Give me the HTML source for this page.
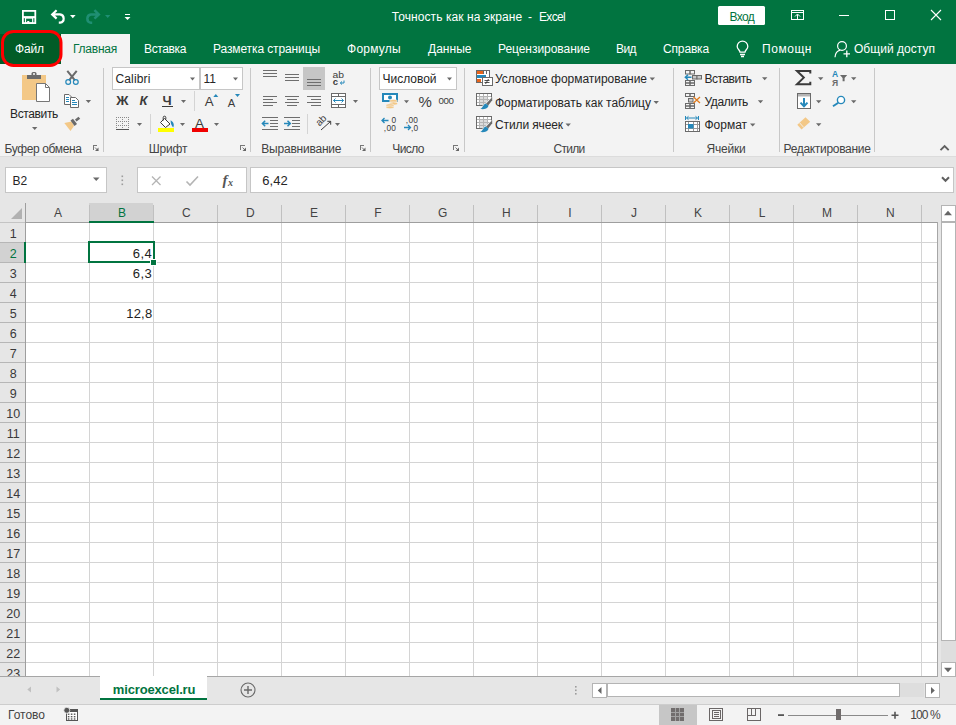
<!DOCTYPE html>
<html lang="ru"><head><meta charset="utf-8"><title>Excel</title>
<style>
html,body{margin:0;padding:0;}
body{width:956px;height:725px;overflow:hidden;position:relative;background:#e6e6e6;font-family:'Liberation Sans', sans-serif;}
div{position:absolute;}
.t{position:absolute;white-space:pre;line-height:20px;height:20px;}
svg{position:absolute;left:0;top:0;}
</style></head><body>
<div style="left:0px;top:0px;width:956px;height:64px;background:#017440;"></div>
<div style="left:0px;top:34px;width:61px;height:30px;background:#015c27;"></div>
<div style="left:61px;top:34px;width:69px;height:30px;background:#f3f3f3;"></div>
<div style="left:0px;top:64px;width:956px;height:92px;background:#f3f3f3;"></div>
<div style="left:0px;top:156px;width:956px;height:1px;background:#dcdcdc;"></div>
<div style="left:718px;top:6px;width:47px;height:19px;background:#fff;border:none;box-sizing:border-box;border-radius:1.5px;"></div>
<div style="left:103px;top:68px;width:1px;height:84px;background:#c8c8c8;"></div>
<div style="left:250px;top:68px;width:1px;height:84px;background:#c8c8c8;"></div>
<div style="left:370px;top:68px;width:1px;height:84px;background:#c8c8c8;"></div>
<div style="left:464px;top:68px;width:1px;height:84px;background:#c8c8c8;"></div>
<div style="left:673px;top:68px;width:1px;height:84px;background:#c8c8c8;"></div>
<div style="left:779px;top:68px;width:1px;height:84px;background:#c8c8c8;"></div>
<div style="left:874px;top:68px;width:1px;height:84px;background:#c8c8c8;"></div>
<div style="left:112px;top:67px;width:88px;height:23px;background:#fff;border:1px solid #c6c6c6;box-sizing:border-box;"></div>
<div style="left:200px;top:67px;width:43px;height:23px;background:#fff;border:1px solid #c6c6c6;box-sizing:border-box;"></div>
<div style="left:162px;top:106px;width:10.5px;height:1px;background:#3b3b3b;"></div>
<div style="left:194px;top:91px;width:1px;height:20px;background:#d4d4d4;"></div>
<div style="left:150px;top:114px;width:1px;height:20px;background:#d4d4d4;"></div>
<div style="left:303px;top:67px;width:22px;height:23px;background:#c6c6c6;"></div>
<div style="left:307px;top:114px;width:1px;height:20px;background:#d4d4d4;"></div>
<div style="left:379px;top:67px;width:78px;height:23px;background:#fff;border:1px solid #c6c6c6;box-sizing:border-box;"></div>
<div style="left:5px;top:167px;width:102px;height:26px;background:#fff;border:1px solid #c6c6c6;box-sizing:border-box;"></div>
<div style="left:137px;top:167px;width:110px;height:26px;background:#fff;border:1px solid #c6c6c6;box-sizing:border-box;"></div>
<div style="left:250px;top:167px;width:704px;height:26px;background:#fff;border:1px solid #c6c6c6;box-sizing:border-box;"></div>
<div style="left:0px;top:203px;width:956px;height:19px;background:#e6e6e6;"></div>
<div style="left:0px;top:222px;width:938px;height:454px;background:#fff;"></div>
<div style="left:89px;top:203px;width:64px;height:19px;background:#d2d2d2;"></div>
<div style="left:0px;top:242px;width:25px;height:20px;background:#d2d2d2;"></div>
<div style="left:0px;top:222px;width:25px;height:454px;background:#e6e6e6;border:none;box-sizing:border-box;z-index:0;"></div>
<div style="left:0px;top:242px;width:25px;height:20px;background:#d2d2d2;"></div>
<div style="left:25px;top:205px;width:1px;height:17px;background:#c0c0c0;"></div>
<div style="left:89px;top:205px;width:1px;height:17px;background:#c0c0c0;"></div>
<div style="left:153px;top:205px;width:1px;height:17px;background:#c0c0c0;"></div>
<div style="left:217px;top:205px;width:1px;height:17px;background:#c0c0c0;"></div>
<div style="left:281px;top:205px;width:1px;height:17px;background:#c0c0c0;"></div>
<div style="left:345px;top:205px;width:1px;height:17px;background:#c0c0c0;"></div>
<div style="left:409px;top:205px;width:1px;height:17px;background:#c0c0c0;"></div>
<div style="left:473px;top:205px;width:1px;height:17px;background:#c0c0c0;"></div>
<div style="left:537px;top:205px;width:1px;height:17px;background:#c0c0c0;"></div>
<div style="left:601px;top:205px;width:1px;height:17px;background:#c0c0c0;"></div>
<div style="left:665px;top:205px;width:1px;height:17px;background:#c0c0c0;"></div>
<div style="left:729px;top:205px;width:1px;height:17px;background:#c0c0c0;"></div>
<div style="left:793px;top:205px;width:1px;height:17px;background:#c0c0c0;"></div>
<div style="left:857px;top:205px;width:1px;height:17px;background:#c0c0c0;"></div>
<div style="left:921px;top:205px;width:1px;height:17px;background:#c0c0c0;"></div>
<div style="left:25px;top:222px;width:1px;height:454px;background:#d4d4d4;"></div>
<div style="left:89px;top:222px;width:1px;height:454px;background:#d4d4d4;"></div>
<div style="left:153px;top:222px;width:1px;height:454px;background:#d4d4d4;"></div>
<div style="left:217px;top:222px;width:1px;height:454px;background:#d4d4d4;"></div>
<div style="left:281px;top:222px;width:1px;height:454px;background:#d4d4d4;"></div>
<div style="left:345px;top:222px;width:1px;height:454px;background:#d4d4d4;"></div>
<div style="left:409px;top:222px;width:1px;height:454px;background:#d4d4d4;"></div>
<div style="left:473px;top:222px;width:1px;height:454px;background:#d4d4d4;"></div>
<div style="left:537px;top:222px;width:1px;height:454px;background:#d4d4d4;"></div>
<div style="left:601px;top:222px;width:1px;height:454px;background:#d4d4d4;"></div>
<div style="left:665px;top:222px;width:1px;height:454px;background:#d4d4d4;"></div>
<div style="left:729px;top:222px;width:1px;height:454px;background:#d4d4d4;"></div>
<div style="left:793px;top:222px;width:1px;height:454px;background:#d4d4d4;"></div>
<div style="left:857px;top:222px;width:1px;height:454px;background:#d4d4d4;"></div>
<div style="left:921px;top:222px;width:1px;height:454px;background:#d4d4d4;"></div>
<div style="left:25px;top:242px;width:913px;height:1px;background:#d4d4d4;"></div>
<div style="left:0px;top:242px;width:25px;height:1px;background:#b6b6b6;"></div>
<div style="left:25px;top:262px;width:913px;height:1px;background:#d4d4d4;"></div>
<div style="left:0px;top:262px;width:25px;height:1px;background:#b6b6b6;"></div>
<div style="left:25px;top:282px;width:913px;height:1px;background:#d4d4d4;"></div>
<div style="left:0px;top:282px;width:25px;height:1px;background:#b6b6b6;"></div>
<div style="left:25px;top:302px;width:913px;height:1px;background:#d4d4d4;"></div>
<div style="left:0px;top:302px;width:25px;height:1px;background:#b6b6b6;"></div>
<div style="left:25px;top:322px;width:913px;height:1px;background:#d4d4d4;"></div>
<div style="left:0px;top:322px;width:25px;height:1px;background:#b6b6b6;"></div>
<div style="left:25px;top:342px;width:913px;height:1px;background:#d4d4d4;"></div>
<div style="left:0px;top:342px;width:25px;height:1px;background:#b6b6b6;"></div>
<div style="left:25px;top:362px;width:913px;height:1px;background:#d4d4d4;"></div>
<div style="left:0px;top:362px;width:25px;height:1px;background:#b6b6b6;"></div>
<div style="left:25px;top:382px;width:913px;height:1px;background:#d4d4d4;"></div>
<div style="left:0px;top:382px;width:25px;height:1px;background:#b6b6b6;"></div>
<div style="left:25px;top:402px;width:913px;height:1px;background:#d4d4d4;"></div>
<div style="left:0px;top:402px;width:25px;height:1px;background:#b6b6b6;"></div>
<div style="left:25px;top:422px;width:913px;height:1px;background:#d4d4d4;"></div>
<div style="left:0px;top:422px;width:25px;height:1px;background:#b6b6b6;"></div>
<div style="left:25px;top:442px;width:913px;height:1px;background:#d4d4d4;"></div>
<div style="left:0px;top:442px;width:25px;height:1px;background:#b6b6b6;"></div>
<div style="left:25px;top:462px;width:913px;height:1px;background:#d4d4d4;"></div>
<div style="left:0px;top:462px;width:25px;height:1px;background:#b6b6b6;"></div>
<div style="left:25px;top:482px;width:913px;height:1px;background:#d4d4d4;"></div>
<div style="left:0px;top:482px;width:25px;height:1px;background:#b6b6b6;"></div>
<div style="left:25px;top:502px;width:913px;height:1px;background:#d4d4d4;"></div>
<div style="left:0px;top:502px;width:25px;height:1px;background:#b6b6b6;"></div>
<div style="left:25px;top:522px;width:913px;height:1px;background:#d4d4d4;"></div>
<div style="left:0px;top:522px;width:25px;height:1px;background:#b6b6b6;"></div>
<div style="left:25px;top:542px;width:913px;height:1px;background:#d4d4d4;"></div>
<div style="left:0px;top:542px;width:25px;height:1px;background:#b6b6b6;"></div>
<div style="left:25px;top:562px;width:913px;height:1px;background:#d4d4d4;"></div>
<div style="left:0px;top:562px;width:25px;height:1px;background:#b6b6b6;"></div>
<div style="left:25px;top:582px;width:913px;height:1px;background:#d4d4d4;"></div>
<div style="left:0px;top:582px;width:25px;height:1px;background:#b6b6b6;"></div>
<div style="left:25px;top:602px;width:913px;height:1px;background:#d4d4d4;"></div>
<div style="left:0px;top:602px;width:25px;height:1px;background:#b6b6b6;"></div>
<div style="left:25px;top:622px;width:913px;height:1px;background:#d4d4d4;"></div>
<div style="left:0px;top:622px;width:25px;height:1px;background:#b6b6b6;"></div>
<div style="left:25px;top:642px;width:913px;height:1px;background:#d4d4d4;"></div>
<div style="left:0px;top:642px;width:25px;height:1px;background:#b6b6b6;"></div>
<div style="left:25px;top:662px;width:913px;height:1px;background:#d4d4d4;"></div>
<div style="left:0px;top:662px;width:25px;height:1px;background:#b6b6b6;"></div>
<div style="left:25px;top:682px;width:913px;height:1px;background:#d4d4d4;"></div>
<div style="left:0px;top:682px;width:25px;height:1px;background:#b6b6b6;"></div>
<div style="left:0px;top:222px;width:25px;height:1px;background:#c4c4c4;"></div>
<div style="left:25px;top:222px;width:913px;height:1px;background:#9e9e9e;"></div>
<div style="left:25px;top:203px;width:1px;height:473px;background:#9e9e9e;"></div>
<div style="left:89px;top:221px;width:65px;height:2px;background:#017440;"></div>
<div style="left:24px;top:242px;width:2px;height:21px;background:#017440;"></div>
<div style="left:88px;top:241px;width:67px;height:22px;border:2px solid #017440;box-sizing:border-box;"></div>
<div style="left:150px;top:259px;width:7px;height:7px;background:#fff;"></div>
<div style="left:151px;top:260px;width:5px;height:5px;background:#017440;"></div>
<div style="left:938px;top:203px;width:18px;height:473px;background:#e6e6e6;"></div>
<div style="left:941px;top:205px;width:15px;height:17px;background:#fff;border:1px solid #b4b4b4;box-sizing:border-box;"></div>
<div style="left:941px;top:222px;width:15px;height:419px;background:#fff;border:1px solid #b4b4b4;box-sizing:border-box;"></div>
<div style="left:941px;top:641px;width:15px;height:21px;background:#dedede;"></div>
<div style="left:941px;top:662px;width:15px;height:15px;background:#fff;border:1px solid #b4b4b4;box-sizing:border-box;"></div>
<div style="left:0px;top:677px;width:956px;height:27px;background:#e6e6e6;"></div>
<div style="left:0px;top:676px;width:938px;height:1px;background:#a6a6a6;"></div>
<div style="left:937px;top:222px;width:1px;height:455px;background:#a6a6a6;"></div>
<div style="left:100px;top:676px;width:107px;height:22px;background:#fff;"></div>
<div style="left:100px;top:698px;width:107px;height:2px;background:#017440;"></div>
<div style="left:592px;top:683px;width:15px;height:15px;background:#fff;border:1px solid #b4b4b4;box-sizing:border-box;"></div>
<div style="left:607px;top:683px;width:293px;height:14px;background:#fff;border:1px solid #b4b4b4;box-sizing:border-box;"></div>
<div style="left:900px;top:683px;width:24px;height:14px;background:#dedede;"></div>
<div style="left:925px;top:683px;width:15px;height:15px;background:#fff;border:1px solid #b4b4b4;box-sizing:border-box;"></div>
<div style="left:0px;top:704px;width:956px;height:21px;background:#f3f3f3;"></div>
<div style="left:0px;top:704px;width:956px;height:1px;background:#cdcdcd;"></div>
<div style="left:659px;top:705px;width:38px;height:20px;background:#c6c6c6;"></div>
<svg width="956" height="725" viewBox="0 0 956 725">
<rect x="2.5" y="31.5" width="58.5" height="34" rx="11" ry="11" fill="#015c27" stroke="#ff0000" stroke-width="3"/>
<rect x="22.9" y="10.9" width="12.4" height="12.2" fill="none" stroke="#fff" stroke-width="1.8"/>
<rect x="23" y="16.1" width="12" height="2.1" fill="#fff" />
<rect x="25.5" y="18" width="7.2" height="5" fill="none" stroke="#fff" stroke-width="1.2"/>
<rect x="27.2" y="21" width="2.1" height="2.2" fill="#fff" />
<path d="M56.6,10.2 L52.2,14.4 L56.6,18.6 M52.5,14.4 H60 A4.2,4.2 0 0 1 60.2,22.7 H58.8" fill="none" stroke="#fff" stroke-width="2.2" stroke-linejoin="miter"/>
<polygon points="70,15 75.6,15 72.8,18.2" fill="#fff"/>
<path d="M94.4,10.2 L98.8,14.4 L94.4,18.6 M98.5,14.4 H91 A4.2,4.2 0 0 0 90.8,22.7 H92.2" fill="none" stroke="#1f8f73" stroke-width="2.5" />
<polygon points="105,15 110.4,15 107.7,18" fill="#1f8f73"/>
<rect x="125" y="14" width="5" height="1" fill="#fff" />
<polygon points="124.5,17 130.5,17 127.5,20" fill="#fff"/>
<rect x="791.5" y="10.5" width="12" height="9" fill="none" stroke="#fff" stroke-width="1" shape-rendering="crispEdges"/>
<rect x="791" y="12" width="13" height="1" fill="#fff" shape-rendering="crispEdges"/>
<path d="M797.5,19 V14.5 M795,16.5 L797.5,14 L800,16.5" fill="none" stroke="#fff" stroke-width="1" />
<rect x="839" y="15" width="10" height="1" fill="#fff" shape-rendering="crispEdges"/>
<rect x="885.5" y="10.5" width="9" height="9" fill="none" stroke="#fff" stroke-width="1" shape-rendering="crispEdges"/>
<path d="M931,10 L941,20 M941,10 L931,20" fill="none" stroke="#fff" stroke-width="1.1" />
<path d="M740,52.2 C740,50 737.2,49.3 737.2,46.4 A5.3,5.3 0 0 1 747.8,46.4 C747.8,49.3 745,50 745,52.2 Z M740,54.5 H745 M741,56.5 H744" fill="none" stroke="#fff" stroke-width="1.3" />
<circle cx="842" cy="46" r="4.4" fill="none" stroke="#fff" stroke-width="1.2"/>
<path d="M835,57.3 C835.3,53 837.5,50.8 840.3,50.2" fill="none" stroke="#fff" stroke-width="1.2" />
<path d="M843.5,53.9 H850 M846.8,50.5 V57.3" fill="none" stroke="#fff" stroke-width="1.3" />
<rect x="22" y="75" width="24" height="25" fill="#f3c887" />
<rect x="27" y="75" width="14" height="4" fill="#6a6a6a" />
<rect x="31.5" y="72" width="5" height="4" rx="1.5" fill="#6a6a6a"/>
<rect x="33" y="73.2" width="2" height="1.6" fill="#f3f3f3" />
<path d="M36.5,83.5 H45.5 L49.5,87.5 V101.5 H36.5 Z" fill="#fff" stroke="#767676" stroke-width="1" />
<path d="M45.5,83.5 V87.5 H49.5" fill="none" stroke="#767676" stroke-width="1" />
<polygon points="32,127 37.4,127 34.7,130" fill="#6a6a6a"/>
<path d="M67.3,70.8 L75,80.3 M76.7,70.8 L69,80.3" fill="none" stroke="#6a6a6a" stroke-width="2" />
<circle cx="68.2" cy="82" r="2.4" fill="none" stroke="#2588ba" stroke-width="1.2"/>
<circle cx="75.8" cy="82" r="2.4" fill="none" stroke="#2588ba" stroke-width="1.2"/>
<path d="M64.5,94.5 H69 L71.5,97 V104.5 H64.5 Z" fill="#fff" stroke="#6a6a6a" stroke-width="1" />
<path d="M70.5,97.5 H75.5 L78.5,100.5 V107.5 H70.5 Z" fill="#fff" stroke="#6a6a6a" stroke-width="1" />
<rect x="66" y="97" width="3" height="1" fill="#2588ba" shape-rendering="crispEdges"/>
<rect x="66" y="99" width="3" height="1" fill="#2588ba" shape-rendering="crispEdges"/>
<rect x="66" y="101" width="3" height="1" fill="#2588ba" shape-rendering="crispEdges"/>
<rect x="72" y="102" width="5" height="1" fill="#2588ba" shape-rendering="crispEdges"/>
<rect x="72" y="104" width="5" height="1" fill="#2588ba" shape-rendering="crispEdges"/>
<rect x="72" y="100" width="3" height="1" fill="#2588ba" shape-rendering="crispEdges"/>
<polygon points="85.7,100 91.10000000000001,100 88.4,103" fill="#6a6a6a"/>
<polygon points="64.3,123 71.5,121.5 74,126 70.5,131 " fill="#f3c887"/>
<polygon points="70.5,120.5 73,118.8 77,124 74.5,126" fill="#6a6a6a"/>
<polygon points="75,119.5 78.5,116.8 80.2,118.8 76.5,121.5" fill="#6a6a6a"/>
<path d="M93.0,149.5 V145.5 H97.0" fill="none" stroke="#777" stroke-width="1" shape-rendering="crispEdges"/>
<path d="M95.0,147.5 L98.0,150.5" fill="none" stroke="#777" stroke-width="1" />
<polygon points="98.5,147.5 98.5,151 95.0,151" fill="#666"/>
<path d="M240.5,149.5 V145.5 H244.5" fill="none" stroke="#777" stroke-width="1" shape-rendering="crispEdges"/>
<path d="M242.5,147.5 L245.5,150.5" fill="none" stroke="#777" stroke-width="1" />
<polygon points="246,147.5 246,151 242.5,151" fill="#666"/>
<path d="M360.0,149.5 V145.5 H364.0" fill="none" stroke="#777" stroke-width="1" shape-rendering="crispEdges"/>
<path d="M362.0,147.5 L365.0,150.5" fill="none" stroke="#777" stroke-width="1" />
<polygon points="365.5,147.5 365.5,151 362.0,151" fill="#666"/>
<path d="M453.5,149.5 V145.5 H457.5" fill="none" stroke="#777" stroke-width="1" shape-rendering="crispEdges"/>
<path d="M455.5,147.5 L458.5,150.5" fill="none" stroke="#777" stroke-width="1" />
<polygon points="459,147.5 459,151 455.5,151" fill="#666"/>
<polygon points="190,77.5 195,77.5 192.5,80.5" fill="#6a6a6a"/>
<polygon points="233,77.5 238,77.5 235.5,80.5" fill="#6a6a6a"/>
<polygon points="181,100 186,100 183.5,103" fill="#6a6a6a"/>
<polygon points="213.3,97 215.8,94 218.3,97" fill="#2588ba"/>
<polygon points="235,94 240,94 237.5,97" fill="#2588ba"/>
<line x1="116" x2="129" y1="117.5" y2="117.5" stroke="#8a8a8a" stroke-width="1" stroke-dasharray="1,1" shape-rendering="crispEdges"/>
<line x1="116" x2="129" y1="121.5" y2="121.5" stroke="#8a8a8a" stroke-width="1" stroke-dasharray="1,1" shape-rendering="crispEdges"/>
<line x1="116" x2="129" y1="125.5" y2="125.5" stroke="#8a8a8a" stroke-width="1" stroke-dasharray="1,1" shape-rendering="crispEdges"/>
<line x1="116.5" x2="116.5" y1="117" y2="129" stroke="#8a8a8a" stroke-width="1" stroke-dasharray="1,1" shape-rendering="crispEdges"/>
<line x1="122.5" x2="122.5" y1="117" y2="129" stroke="#8a8a8a" stroke-width="1" stroke-dasharray="1,1" shape-rendering="crispEdges"/>
<line x1="128.5" x2="128.5" y1="117" y2="129" stroke="#8a8a8a" stroke-width="1" stroke-dasharray="1,1" shape-rendering="crispEdges"/>
<rect x="116" y="129" width="13" height="1" fill="#555" shape-rendering="crispEdges"/>
<polygon points="137,123 142,123 139.5,126" fill="#6a6a6a"/>
<path d="M164.5,118.5 L170,124 L165.5,127.5 L160.5,122.5 Z" fill="#fff" stroke="#3b3b3b" stroke-width="1" />
<path d="M163.2,120.5 V117.5 A1.3,1.3 0 0 1 165.8,117.5 V119.5" fill="none" stroke="#3b3b3b" stroke-width="1" />
<path d="M170.6,120.3 C173.6,121.8 174.5,125 173.2,127.4 C171.5,126 170.6,123.5 170.6,120.3 Z" fill="#2588ba"/>
<rect x="158" y="128" width="16" height="4" fill="#ffff00" />
<polygon points="180,123 185,123 182.5,126" fill="#6a6a6a"/>
<text x="195" y="127.6" font-family="Liberation Sans, sans-serif" font-size="13.5" font-weight="normal" fill="#3b3b3b" >A</text>
<rect x="192" y="128" width="16" height="4" fill="#f00000" />
<polygon points="214,123 219,123 216.5,126" fill="#6a6a6a"/>
<rect x="263" y="70" width="14" height="1" fill="#6e6e6e" shape-rendering="crispEdges"/>
<rect x="263" y="73" width="14" height="1" fill="#6e6e6e" shape-rendering="crispEdges"/>
<rect x="263" y="76" width="14" height="1" fill="#6e6e6e" shape-rendering="crispEdges"/>
<rect x="285" y="74" width="14" height="1" fill="#6e6e6e" shape-rendering="crispEdges"/>
<rect x="285" y="77" width="14" height="1" fill="#6e6e6e" shape-rendering="crispEdges"/>
<rect x="285" y="80" width="14" height="1" fill="#6e6e6e" shape-rendering="crispEdges"/>
<rect x="307" y="79" width="14" height="1" fill="#6e6e6e" shape-rendering="crispEdges"/>
<rect x="307" y="82" width="14" height="1" fill="#6e6e6e" shape-rendering="crispEdges"/>
<rect x="307" y="85" width="14" height="1" fill="#6e6e6e" shape-rendering="crispEdges"/>
<text x="332.5" y="78" font-family="Liberation Sans, sans-serif" font-size="9.5" font-weight="normal" fill="#3b3b3b" textLength="11.5" lengthAdjust="spacingAndGlyphs">ab</text>
<text x="332.8" y="84.5" font-family="Liberation Sans, sans-serif" font-size="9.5" font-weight="bold" fill="#3b3b3b" >c</text>
<path d="M344,80.5 V83 H340.5 M342,81.5 L340.3,83 L342,84.5" fill="none" stroke="#2588ba" stroke-width="1" />
<rect x="263" y="96" width="14" height="1" fill="#6e6e6e" shape-rendering="crispEdges"/>
<rect x="285" y="96" width="14" height="1" fill="#6e6e6e" shape-rendering="crispEdges"/>
<rect x="307" y="96" width="14" height="1" fill="#6e6e6e" shape-rendering="crispEdges"/>
<rect x="263" y="99" width="10" height="1" fill="#6e6e6e" shape-rendering="crispEdges"/>
<rect x="287" y="99" width="10" height="1" fill="#6e6e6e" shape-rendering="crispEdges"/>
<rect x="311" y="99" width="10" height="1" fill="#6e6e6e" shape-rendering="crispEdges"/>
<rect x="263" y="102" width="14" height="1" fill="#6e6e6e" shape-rendering="crispEdges"/>
<rect x="285" y="102" width="14" height="1" fill="#6e6e6e" shape-rendering="crispEdges"/>
<rect x="307" y="102" width="14" height="1" fill="#6e6e6e" shape-rendering="crispEdges"/>
<rect x="263" y="105" width="10" height="1" fill="#6e6e6e" shape-rendering="crispEdges"/>
<rect x="287" y="105" width="10" height="1" fill="#6e6e6e" shape-rendering="crispEdges"/>
<rect x="311" y="105" width="10" height="1" fill="#6e6e6e" shape-rendering="crispEdges"/>
<rect x="331.5" y="93.5" width="14" height="14" fill="#fff" stroke="#6a6a6a" stroke-width="1" shape-rendering="crispEdges"/>
<rect x="331" y="96" width="15" height="1" fill="#6a6a6a" shape-rendering="crispEdges"/>
<rect x="331" y="104" width="15" height="1" fill="#6a6a6a" shape-rendering="crispEdges"/>
<rect x="338" y="93" width="1" height="3" fill="#6a6a6a" shape-rendering="crispEdges"/>
<rect x="338" y="104" width="1" height="4" fill="#6a6a6a" shape-rendering="crispEdges"/>
<path d="M333.5,100.5 H343.5 M335.5,98.5 L333.5,100.5 L335.5,102.5 M341.5,98.5 L343.5,100.5 L341.5,102.5" fill="none" stroke="#2588ba" stroke-width="1" />
<polygon points="353,100 358,100 355.5,103" fill="#6a6a6a"/>
<rect x="262" y="117" width="16" height="1" fill="#6e6e6e" shape-rendering="crispEdges"/>
<rect x="262" y="129" width="16" height="1" fill="#6e6e6e" shape-rendering="crispEdges"/>
<rect x="270" y="120" width="8" height="1" fill="#6e6e6e" shape-rendering="crispEdges"/>
<rect x="270" y="123" width="8" height="1" fill="#6e6e6e" shape-rendering="crispEdges"/>
<rect x="270" y="126" width="8" height="1" fill="#6e6e6e" shape-rendering="crispEdges"/>
<path d="M268.5,123.5 H262.5 M265.2,120.8 L262.4,123.5 L265.2,126.2" fill="none" stroke="#2588ba" stroke-width="1.5" />
<rect x="284" y="117" width="16" height="1" fill="#6e6e6e" shape-rendering="crispEdges"/>
<rect x="284" y="129" width="16" height="1" fill="#6e6e6e" shape-rendering="crispEdges"/>
<rect x="292" y="120" width="8" height="1" fill="#6e6e6e" shape-rendering="crispEdges"/>
<rect x="292" y="123" width="8" height="1" fill="#6e6e6e" shape-rendering="crispEdges"/>
<rect x="292" y="126" width="8" height="1" fill="#6e6e6e" shape-rendering="crispEdges"/>
<path d="M284,123.5 H290 M287.5,120.8 L290.3,123.5 L287.5,126.2" fill="none" stroke="#2588ba" stroke-width="1.5" />
<text transform="translate(319.5,126.5) rotate(-45)" font-family="Liberation Sans, sans-serif" font-size="9.8" fill="#3b3b3b">ab</text>
<path d="M321,130 L330.5,121.5 M327.3,121.3 H330.7 V124.7" fill="none" stroke="#3b3b3b" stroke-width="1" />
<polygon points="335,123 340,123 337.5,126" fill="#6a6a6a"/>
<polygon points="447,77.6 452,77.6 449.5,80.6" fill="#6a6a6a"/>
<rect x="383.0" y="94.0" width="14" height="7" fill="#fff" stroke="#2588ba" stroke-width="2" shape-rendering="crispEdges"/>
<circle cx="390" cy="97.5" r="2" fill="#2588ba"/>
<ellipse cx="393.5" cy="101" rx="4" ry="1.6" fill="#f3c887" stroke="#f3f3f3" stroke-width=".6"/>
<ellipse cx="393.5" cy="103.5" rx="4" ry="1.6" fill="#f3c887" stroke="#f3f3f3" stroke-width=".6"/>
<ellipse cx="390" cy="105.3" rx="4" ry="1.6" fill="#f3c887" stroke="#f3f3f3" stroke-width=".6"/>
<ellipse cx="390" cy="107.3" rx="4" ry="1.4" fill="#f3c887" stroke="#f3f3f3" stroke-width=".6"/>
<polygon points="404,100.2 409,100.2 406.5,103.2" fill="#6a6a6a"/>
<path d="M382,120.5 H388.5 M384.5,118 L382,120.5 L384.5,123" fill="none" stroke="#2588ba" stroke-width="1.3" />
<text x="391.5" y="123.2" font-family="Liberation Sans, sans-serif" font-size="8.3" font-weight="normal" fill="#3b3b3b" >0</text>
<text x="383.8" y="130.7" font-family="Liberation Sans, sans-serif" font-size="8.3" font-weight="normal" fill="#3b3b3b" letter-spacing="0.3">,00</text>
<text x="405.8" y="123.2" font-family="Liberation Sans, sans-serif" font-size="8.3" font-weight="normal" fill="#3b3b3b" letter-spacing="0.3">,00</text>
<path d="M404,127.5 H410.5 M408,125 L410.5,127.5 L408,130" fill="none" stroke="#2588ba" stroke-width="1.3" />
<text x="411" y="130.7" font-family="Liberation Sans, sans-serif" font-size="8.3" font-weight="normal" fill="#3b3b3b" letter-spacing="0.3">,0</text>
<rect x="476.5" y="70.5" width="13" height="12" fill="#fff" stroke="#6a6a6a" stroke-width="1" shape-rendering="crispEdges"/>
<rect x="477" y="71" width="6" height="3" fill="#e8641b" />
<rect x="477" y="75" width="9" height="3" fill="#2588ba" />
<rect x="477" y="79" width="4" height="3" fill="#e8641b" />
<rect x="483" y="71" width="1" height="3" fill="#6a6a6a" shape-rendering="crispEdges"/>
<rect x="486" y="71" width="1" height="3" fill="#6a6a6a" shape-rendering="crispEdges"/>
<rect x="482.5" y="77.5" width="9.5" height="8" fill="#fff" stroke="#6a6a6a" stroke-width="1" shape-rendering="crispEdges"/>
<path d="M484.5,80.5 H489.5 M484.5,82.5 H489.5 M488.5,79 L485.5,84" fill="none" stroke="#3b3b3b" stroke-width="0.9" />
<polygon points="649.6,77.5 655.0,77.5 652.3000000000001,80.5" fill="#6a6a6a"/>
<rect x="476.5" y="93.5" width="15" height="12" fill="#fff" stroke="#6a6a6a" stroke-width="1" shape-rendering="crispEdges"/>
<rect x="480" y="97" width="8" height="8" fill="#dcdcdc" />
<rect x="479" y="94" width="1" height="11" fill="#b4b4b4" shape-rendering="crispEdges"/>
<rect x="483" y="94" width="1" height="11" fill="#b4b4b4" shape-rendering="crispEdges"/>
<rect x="487" y="94" width="1" height="11" fill="#b4b4b4" shape-rendering="crispEdges"/>
<rect x="477" y="96" width="14" height="1" fill="#b4b4b4" shape-rendering="crispEdges"/>
<rect x="477" y="99" width="14" height="1" fill="#b4b4b4" shape-rendering="crispEdges"/>
<rect x="477" y="102" width="14" height="1" fill="#b4b4b4" shape-rendering="crispEdges"/>
<polygon points="481.5,106.6 492.6,96.6 492.6,106.6" fill="#f3f3f3"/>
<polygon points="492.2,97.2 492.2,100.2 488.2,105.4 486,103.8" fill="#6a6a6a"/>
<path d="M480.2,109 C483.2,108 482.8,104.6 485.6,103.6 L488.6,105.8 C487.3,109.4 483.2,109.3 480.2,109 Z" fill="#2588ba"/>
<rect x="476.5" y="116.5" width="15" height="12" fill="#fff" stroke="#6a6a6a" stroke-width="1" shape-rendering="crispEdges"/>
<rect x="480" y="120" width="8" height="8" fill="#dcdcdc" />
<rect x="479" y="117" width="1" height="11" fill="#b4b4b4" shape-rendering="crispEdges"/>
<rect x="483" y="117" width="1" height="11" fill="#b4b4b4" shape-rendering="crispEdges"/>
<rect x="487" y="117" width="1" height="11" fill="#b4b4b4" shape-rendering="crispEdges"/>
<rect x="477" y="119" width="14" height="1" fill="#b4b4b4" shape-rendering="crispEdges"/>
<rect x="477" y="122" width="14" height="1" fill="#b4b4b4" shape-rendering="crispEdges"/>
<rect x="477" y="125" width="14" height="1" fill="#b4b4b4" shape-rendering="crispEdges"/>
<polygon points="481.5,129.6 492.6,119.6 492.6,129.6" fill="#f3f3f3"/>
<polygon points="492.2,120.2 492.2,123.2 488.2,128.4 486,126.8" fill="#6a6a6a"/>
<path d="M480.2,132 C483.2,131 482.8,127.6 485.6,126.6 L488.6,128.8 C487.3,132.4 483.2,132.3 480.2,132 Z" fill="#2588ba"/>
<polygon points="653.5,101 658.9,101 656.2,104" fill="#6a6a6a"/>
<polygon points="565.5,123.5 570.9,123.5 568.2,126.5" fill="#6a6a6a"/>
<rect x="685.5" y="70.5" width="4.5" height="3.5" fill="none" stroke="#6a6a6a" stroke-width="1"/>
<rect x="690.0" y="70.5" width="4.5" height="3.5" fill="none" stroke="#6a6a6a" stroke-width="1"/>
<rect x="692.5" y="75.5" width="4.5" height="3.5" fill="#c8c8c8" stroke="#6a6a6a" stroke-width="1"/>
<rect x="697.0" y="75.5" width="4.5" height="3.5" fill="#c8c8c8" stroke="#6a6a6a" stroke-width="1"/>
<rect x="685.5" y="80.5" width="4.5" height="2.5" fill="none" stroke="#6a6a6a" stroke-width="1"/>
<rect x="690.0" y="80.5" width="4.5" height="2.5" fill="none" stroke="#6a6a6a" stroke-width="1"/>
<rect x="685.5" y="83.0" width="4.5" height="2.5" fill="none" stroke="#6a6a6a" stroke-width="1"/>
<rect x="690.0" y="83.0" width="4.5" height="2.5" fill="none" stroke="#6a6a6a" stroke-width="1"/>
<path d="M691.5,77.3 H685.5 M688,74.8 L685.3,77.3 L688,79.8" fill="none" stroke="#2588ba" stroke-width="1.4" />
<polygon points="762,77.2 767.4,77.2 764.7,80.2" fill="#6a6a6a"/>
<rect x="685.5" y="93.5" width="4.5" height="3" fill="none" stroke="#6a6a6a" stroke-width="1"/>
<rect x="690.0" y="93.5" width="4.5" height="3" fill="none" stroke="#6a6a6a" stroke-width="1"/>
<rect x="688.5" y="98.5" width="4.5" height="3.5" fill="#c8c8c8" stroke="#6a6a6a" stroke-width="1"/>
<rect x="685.5" y="103.5" width="4.5" height="2.5" fill="none" stroke="#6a6a6a" stroke-width="1"/>
<rect x="690.0" y="103.5" width="4.5" height="2.5" fill="none" stroke="#6a6a6a" stroke-width="1"/>
<rect x="685.5" y="106.0" width="4.5" height="2.5" fill="none" stroke="#6a6a6a" stroke-width="1"/>
<rect x="690.0" y="106.0" width="4.5" height="2.5" fill="none" stroke="#6a6a6a" stroke-width="1"/>
<path d="M693.5,97 L700,103 M700,97 L693.5,103" fill="none" stroke="#e07b1d" stroke-width="1.3" />
<polygon points="757.8,100.2 763.1999999999999,100.2 760.5,103.2" fill="#6a6a6a"/>
<path d="M685.5,116 V120 M698.5,116 V120 M686.5,118 H697.5 M688.5,116.3 L686.5,118 L688.5,119.7 M695.5,116.3 L697.5,118 L695.5,119.7" fill="none" stroke="#2588ba" stroke-width="1" />
<rect x="685.5" y="121.5" width="14" height="10" fill="#fff" stroke="#6a6a6a" stroke-width="1" shape-rendering="crispEdges"/>
<rect x="688" y="122" width="1" height="9" fill="#9a9a9a" shape-rendering="crispEdges"/>
<rect x="693" y="122" width="1" height="9" fill="#9a9a9a" shape-rendering="crispEdges"/>
<rect x="697" y="122" width="1" height="9" fill="#9a9a9a" shape-rendering="crispEdges"/>
<rect x="686" y="124" width="13" height="1" fill="#9a9a9a" shape-rendering="crispEdges"/>
<rect x="686" y="128" width="13" height="1" fill="#9a9a9a" shape-rendering="crispEdges"/>
<rect x="688" y="124" width="5.5" height="4.5" fill="#2588ba" />
<polygon points="750,123.4 755.4,123.4 752.7,126.4" fill="#6a6a6a"/>
<path d="M810.3,73.4 V71 H797 L803.8,77.6 L797,84.2 H810.3 V81.8" fill="none" stroke="#3b3b3b" stroke-width="2" stroke-linejoin="miter"/>
<polygon points="818,77.2 823.4,77.2 820.7,80.2" fill="#6a6a6a"/>
<text x="832" y="76.8" font-family="Liberation Sans, sans-serif" font-size="8.5" font-weight="bold" fill="#2588ba" >A</text>
<text x="832" y="85.8" font-family="Liberation Sans, sans-serif" font-size="8.5" font-weight="bold" fill="#6a6a6a" >Я</text>
<polygon points="840,75 847.2,75 844.6,78 844.6,81.2 842.6,81.2 842.6,78" fill="#6a6a6a"/>
<polygon points="851,77.2 856.4,77.2 853.7,80.2" fill="#6a6a6a"/>
<rect x="797.5" y="93.5" width="13" height="15" fill="#fff" stroke="#6a6a6a" stroke-width="1" shape-rendering="crispEdges"/>
<rect x="798" y="94" width="12" height="2.5" fill="#b5b5b5" />
<path d="M804,98 V106 M800.5,102.6 L804,106.3 L807.5,102.6" fill="none" stroke="#2588ba" stroke-width="2" />
<polygon points="816,100.2 821.4,100.2 818.7,103.2" fill="#6a6a6a"/>
<circle cx="841" cy="100" r="3.6" fill="#fff" stroke="#2588ba" stroke-width="1.4"/>
<path d="M838.3,102.7 L833,106.3" fill="none" stroke="#2588ba" stroke-width="1.9" />
<polygon points="851,100.2 856.4,100.2 853.7,103.2" fill="#6a6a6a"/>
<polygon points="797.3,124.8 805.5,117.3 810.2,121.8 801.5,129.6" fill="#f3c887"/>
<path d="M799.6,122.8 L803.7,127.4" fill="none" stroke="#f3f3f3" stroke-width="0.9" />
<polygon points="816,123.3 821.4,123.3 818.7,126.3" fill="#6a6a6a"/>
<path d="M940.5,150.2 L944.6,146.1 L948.7,150.2" fill="none" stroke="#606060" stroke-width="1.9" />
<polygon points="93,177.5 99.5,177.5 96.25,181.0" fill="#6a6a6a"/>
<rect x="121.5" y="175.5" width="1.6" height="1.6" fill="#9c9c9c" />
<rect x="121.5" y="179.5" width="1.6" height="1.6" fill="#9c9c9c" />
<rect x="121.5" y="183.5" width="1.6" height="1.6" fill="#9c9c9c" />
<path d="M152,176.5 L160.5,185 M160.5,176.5 L152,185" fill="none" stroke="#b4b4b4" stroke-width="1.3" />
<path d="M186.5,181.5 L190,185 L198,176.5" fill="none" stroke="#b4b4b4" stroke-width="1.6" />
<path d="M942,177.3 L945.5,180.8 L949,177.3" fill="none" stroke="#606060" stroke-width="2" />
<polygon points="22,208 22,219 11,219" fill="#b1b1b1"/>
<polygon points="944.5,214.5 944.5,214.5 944.5,214.5" fill="#777"/>
<polygon points="944,215.3 952,215.3 948,210.8" fill="#666"/>
<polygon points="944,667.7 952,667.7 948,672.2" fill="#666"/>
<polygon points="601.5,687 601.5,694 597.8,690.5" fill="#666"/>
<polygon points="931,687 931,694 934.8,690.5" fill="#666"/>
<rect x="575" y="686" width="1.6" height="1.6" fill="#9c9c9c" />
<rect x="575" y="689.5" width="1.6" height="1.6" fill="#9c9c9c" />
<rect x="575" y="693" width="1.6" height="1.6" fill="#9c9c9c" />
<polygon points="31,686.5 31,692.5 27.3,689.5" fill="#c0c0c0"/>
<polygon points="56.5,686.5 56.5,692.5 60.2,689.5" fill="#c0c0c0"/>
<circle cx="248" cy="690" r="7" fill="none" stroke="#6a6a6a" stroke-width="1.1"/>
<path d="M244,690 H252 M248,686 V694" fill="none" stroke="#6a6a6a" stroke-width="1.4" />
<rect x="66.5" y="709.5" width="10.5" height="10.5" fill="#fff" stroke="#555" stroke-width="1" shape-rendering="crispEdges"/>
<rect x="66" y="709" width="11.5" height="3" fill="#555" />
<rect x="67.8" y="713.5" width="1.6" height="1.4" fill="#555" />
<rect x="67.8" y="716" width="1.6" height="1.4" fill="#555" />
<rect x="67.8" y="718.3" width="1.6" height="1.4" fill="#555" />
<rect x="70.8" y="713.5" width="1.6" height="1.4" fill="#555" />
<rect x="70.8" y="716" width="1.6" height="1.4" fill="#555" />
<rect x="70.8" y="718.3" width="1.6" height="1.4" fill="#555" />
<rect x="73.8" y="713.5" width="1.6" height="1.4" fill="#555" />
<rect x="73.8" y="716" width="1.6" height="1.4" fill="#555" />
<rect x="73.8" y="718.3" width="1.6" height="1.4" fill="#555" />
<circle cx="66.8" cy="710.3" r="3" fill="#555" stroke="#f3f3f3" stroke-width=".8"/>
<rect x="671" y="708" width="13" height="13" fill="#716d6d" shape-rendering="crispEdges"/>
<rect x="675" y="708" width="1" height="13" fill="#a2a2a2" shape-rendering="crispEdges"/>
<rect x="679" y="708" width="1" height="13" fill="#a2a2a2" shape-rendering="crispEdges"/>
<rect x="671" y="712" width="13" height="1" fill="#a2a2a2" shape-rendering="crispEdges"/>
<rect x="671" y="716" width="13" height="1" fill="#a2a2a2" shape-rendering="crispEdges"/>
<rect x="709.5" y="708.5" width="13" height="12" fill="none" stroke="#6a6666" stroke-width="1" shape-rendering="crispEdges"/>
<rect x="712.5" y="710.5" width="8" height="8" fill="none" stroke="#6a6666" stroke-width="1" shape-rendering="crispEdges"/>
<rect x="714" y="712" width="5" height="1" fill="#6a6666" shape-rendering="crispEdges"/>
<rect x="714" y="714" width="5" height="1" fill="#6a6666" shape-rendering="crispEdges"/>
<rect x="714" y="716" width="5" height="1" fill="#6a6666" shape-rendering="crispEdges"/>
<rect x="747.5" y="708.5" width="13" height="12" fill="none" stroke="#6a6666" stroke-width="1" shape-rendering="crispEdges"/>
<rect x="751" y="708" width="1" height="7" fill="#6a6666" shape-rendering="crispEdges"/>
<rect x="755" y="708" width="1" height="8" fill="#6a6666" shape-rendering="crispEdges"/>
<rect x="747" y="715" width="9" height="1" fill="#6a6666" shape-rendering="crispEdges"/>
<rect x="778" y="714.2" width="6" height="1.8" fill="#555" />
<rect x="788" y="715" width="100" height="1" fill="#8a8a8a" shape-rendering="crispEdges"/>
<rect x="836" y="709" width="5" height="11" fill="#706c6c" />
<path d="M891.5,715.3 H898.5 M895,711.8 V718.8" fill="none" stroke="#555" stroke-width="1.6" />
</svg>
<span class="t" style="left:391.8px;top:6.5px;font-size:12px;color:#fff;letter-spacing:0.074px;">Точность как на экране</span>
<span class="t" style="left:528px;top:6.5px;font-size:12px;color:#fff;letter-spacing:0.500px;">-</span>
<span class="t" style="left:539px;top:6.5px;font-size:12px;color:#fff;letter-spacing:-0.669px;">Excel</span>
<span class="t" style="left:729.5px;top:6.5px;font-size:12px;color:#017440;letter-spacing:-0.664px;">Вход</span>
<span class="t" style="left:15px;top:38.5px;font-size:12px;color:#fff;letter-spacing:-0.129px;">Файл</span>
<span class="t" style="left:73px;top:38.5px;font-size:12px;color:#017440;letter-spacing:-0.241px;">Главная</span>
<span class="t" style="left:144px;top:38.5px;font-size:12px;color:#fff;letter-spacing:-0.373px;">Вставка</span>
<span class="t" style="left:213px;top:38.5px;font-size:12px;color:#fff;letter-spacing:-0.110px;">Разметка страницы</span>
<span class="t" style="left:347px;top:38.5px;font-size:12px;color:#fff;letter-spacing:0.254px;">Формулы</span>
<span class="t" style="left:428px;top:38.5px;font-size:12px;color:#fff;letter-spacing:0.023px;">Данные</span>
<span class="t" style="left:498px;top:38.5px;font-size:12px;color:#fff;letter-spacing:-0.048px;">Рецензирование</span>
<span class="t" style="left:616px;top:38.5px;font-size:12px;color:#fff;letter-spacing:-0.573px;">Вид</span>
<span class="t" style="left:663px;top:38.5px;font-size:12px;color:#fff;letter-spacing:-0.154px;">Справка</span>
<span class="t" style="left:762px;top:38.5px;font-size:12px;color:#fff;letter-spacing:0.544px;">Помощн</span>
<span class="t" style="left:854px;top:38.5px;font-size:12px;color:#fff;letter-spacing:0.031px;">Общий доступ</span>
<span class="t" style="left:4.5px;top:138.5px;font-size:12px;color:#444;letter-spacing:-0.379px;">Буфер обмена</span>
<span class="t" style="left:148.8px;top:138.5px;font-size:12px;color:#444;letter-spacing:-0.197px;">Шрифт</span>
<span class="t" style="left:261.3px;top:138.5px;font-size:12px;color:#444;letter-spacing:-0.217px;">Выравнивание</span>
<span class="t" style="left:392.3px;top:138.5px;font-size:12px;color:#444;letter-spacing:-0.603px;">Число</span>
<span class="t" style="left:553.5px;top:138.5px;font-size:12px;color:#444;letter-spacing:-0.716px;">Стили</span>
<span class="t" style="left:706.5px;top:138.5px;font-size:12px;color:#444;letter-spacing:-0.208px;">Ячейки</span>
<span class="t" style="left:783.5px;top:138.5px;font-size:12px;color:#444;letter-spacing:-0.316px;">Редактирование</span>
<span class="t" style="left:10px;top:103.5px;font-size:12px;color:#262626;letter-spacing:-0.359px;">Вставить</span>
<span class="t" style="left:115.5px;top:69.0px;font-size:12px;color:#262626;letter-spacing:0.141px;">Calibri</span>
<span class="t" style="left:203.5px;top:69.0px;font-size:12px;color:#262626;letter-spacing:0.016px;">11</span>
<span class="t" style="left:116.3px;top:90.5px;font-size:13.5px;color:#3b3b3b;font-weight:bold;letter-spacing:1.297px;">Ж</span>
<span class="t" style="left:139.5px;top:90.5px;font-size:13px;color:#3b3b3b;font-weight:bold;font-style:italic;letter-spacing:1.000px;">К</span>
<span class="t" style="left:162.5px;top:90.5px;font-size:13px;color:#3b3b3b;font-weight:bold;letter-spacing:0.359px;border-bottom:0;">Ч</span>
<span class="t" style="left:204.8px;top:92.0px;font-size:13.3px;color:#3b3b3b;letter-spacing:0.925px;">A</span>
<span class="t" style="left:227.8px;top:92.8px;font-size:11.2px;color:#3b3b3b;letter-spacing:0.531px;">A</span>
<span class="t" style="left:382.5px;top:69.0px;font-size:12px;color:#262626;letter-spacing:-0.018px;">Числовой</span>
<span class="t" style="left:418.5px;top:91.6px;font-size:15px;color:#3b3b3b;letter-spacing:-0.744px;">%</span>
<span class="t" style="left:438.6px;top:91.4px;font-size:9.7px;color:#3b3b3b;letter-spacing:-0.391px;">000</span>
<span class="t" style="left:495px;top:69.0px;font-size:12px;color:#262626;letter-spacing:-0.029px;">Условное форматирование</span>
<span class="t" style="left:495px;top:92.5px;font-size:12px;color:#262626;letter-spacing:-0.006px;">Форматировать как таблицу</span>
<span class="t" style="left:495px;top:115.0px;font-size:12px;color:#262626;letter-spacing:-0.115px;">Стили ячеек</span>
<span class="t" style="left:704.5px;top:69.0px;font-size:12px;color:#262626;letter-spacing:-0.484px;">Вставить</span>
<span class="t" style="left:704.5px;top:92.0px;font-size:12px;color:#262626;letter-spacing:-0.333px;">Удалить</span>
<span class="t" style="left:704.5px;top:115.0px;font-size:12px;color:#262626;letter-spacing:-0.023px;">Формат</span>
<span class="t" style="left:12.5px;top:170.5px;font-size:12px;color:#262626;letter-spacing:-0.094px;">B2</span>
<span class="t" style="left:262.3px;top:170.7px;font-size:13px;color:#262626;letter-spacing:0.047px;">6,42</span>
<span class="t" style="left:222.5px;top:170.0px;font-size:15px;color:#555;font-weight:bold;font-style:italic;font-family:'Liberation Serif', serif;letter-spacing:-0.500px;">f</span>
<span class="t" style="left:228px;top:172.5px;font-size:10px;color:#555;font-weight:bold;font-style:italic;font-family:'Liberation Serif', serif;letter-spacing:0.500px;">x</span>
<span class="t" style="left:53px;top:203.0px;font-size:12px;color:#444;width:8px;text-align:center;left:54px;">A</span>
<span class="t" style="left:117px;top:203.0px;font-size:12px;color:#017440;width:8px;text-align:center;left:118px;">B</span>
<span class="t" style="left:181px;top:203.0px;font-size:12px;color:#444;width:8px;text-align:center;left:182px;">C</span>
<span class="t" style="left:245px;top:203.0px;font-size:12px;color:#444;width:8px;text-align:center;left:246px;">D</span>
<span class="t" style="left:309px;top:203.0px;font-size:12px;color:#444;width:8px;text-align:center;left:310px;">E</span>
<span class="t" style="left:373px;top:203.0px;font-size:12px;color:#444;width:8px;text-align:center;left:374px;">F</span>
<span class="t" style="left:437px;top:203.0px;font-size:12px;color:#444;width:8px;text-align:center;left:438px;">G</span>
<span class="t" style="left:501px;top:203.0px;font-size:12px;color:#444;width:8px;text-align:center;left:502px;">H</span>
<span class="t" style="left:565px;top:203.0px;font-size:12px;color:#444;width:8px;text-align:center;left:566px;">I</span>
<span class="t" style="left:629px;top:203.0px;font-size:12px;color:#444;width:8px;text-align:center;left:630px;">J</span>
<span class="t" style="left:693px;top:203.0px;font-size:12px;color:#444;width:8px;text-align:center;left:694px;">K</span>
<span class="t" style="left:757px;top:203.0px;font-size:12px;color:#444;width:8px;text-align:center;left:758px;">L</span>
<span class="t" style="left:821px;top:203.0px;font-size:12px;color:#444;width:8px;text-align:center;left:822px;">M</span>
<span class="t" style="left:885px;top:203.0px;font-size:12px;color:#444;width:8px;text-align:center;left:886px;">N</span>
<span class="t" style="left:0.8px;top:224.0px;font-size:12.5px;color:#3a3a3a;width:25px;text-align:center;">1</span>
<span class="t" style="left:0.8px;top:244.0px;font-size:12.5px;color:#017440;width:25px;text-align:center;">2</span>
<span class="t" style="left:0.8px;top:264.0px;font-size:12.5px;color:#3a3a3a;width:25px;text-align:center;">3</span>
<span class="t" style="left:0.8px;top:284.0px;font-size:12.5px;color:#3a3a3a;width:25px;text-align:center;">4</span>
<span class="t" style="left:0.8px;top:304.0px;font-size:12.5px;color:#3a3a3a;width:25px;text-align:center;">5</span>
<span class="t" style="left:0.8px;top:324.0px;font-size:12.5px;color:#3a3a3a;width:25px;text-align:center;">6</span>
<span class="t" style="left:0.8px;top:344.0px;font-size:12.5px;color:#3a3a3a;width:25px;text-align:center;">7</span>
<span class="t" style="left:0.8px;top:364.0px;font-size:12.5px;color:#3a3a3a;width:25px;text-align:center;">8</span>
<span class="t" style="left:0.8px;top:384.0px;font-size:12.5px;color:#3a3a3a;width:25px;text-align:center;">9</span>
<span class="t" style="left:0.8px;top:404.0px;font-size:12.5px;color:#3a3a3a;width:25px;text-align:center;">10</span>
<span class="t" style="left:0.8px;top:424.0px;font-size:12.5px;color:#3a3a3a;width:25px;text-align:center;">11</span>
<span class="t" style="left:0.8px;top:444.0px;font-size:12.5px;color:#3a3a3a;width:25px;text-align:center;">12</span>
<span class="t" style="left:0.8px;top:464.0px;font-size:12.5px;color:#3a3a3a;width:25px;text-align:center;">13</span>
<span class="t" style="left:0.8px;top:484.0px;font-size:12.5px;color:#3a3a3a;width:25px;text-align:center;">14</span>
<span class="t" style="left:0.8px;top:504.0px;font-size:12.5px;color:#3a3a3a;width:25px;text-align:center;">15</span>
<span class="t" style="left:0.8px;top:524.0px;font-size:12.5px;color:#3a3a3a;width:25px;text-align:center;">16</span>
<span class="t" style="left:0.8px;top:544.0px;font-size:12.5px;color:#3a3a3a;width:25px;text-align:center;">17</span>
<span class="t" style="left:0.8px;top:564.0px;font-size:12.5px;color:#3a3a3a;width:25px;text-align:center;">18</span>
<span class="t" style="left:0.8px;top:584.0px;font-size:12.5px;color:#3a3a3a;width:25px;text-align:center;">19</span>
<span class="t" style="left:0.8px;top:604.0px;font-size:12.5px;color:#3a3a3a;width:25px;text-align:center;">20</span>
<span class="t" style="left:0.8px;top:624.0px;font-size:12.5px;color:#3a3a3a;width:25px;text-align:center;">21</span>
<span class="t" style="left:0.8px;top:644.0px;font-size:12.5px;color:#3a3a3a;width:25px;text-align:center;">22</span>
<span class="t" style="left:0.8px;top:664.0px;font-size:12.5px;color:#3a3a3a;width:25px;text-align:center;height:12px;overflow:hidden;">23</span>
<span class="t" style="left:100px;top:243.9px;font-size:13px;color:#222;letter-spacing:0.474px;width:52.3px;text-align:right;">6,4</span>
<span class="t" style="left:100px;top:263.9px;font-size:13px;color:#222;letter-spacing:0.474px;width:52.3px;text-align:right;">6,3</span>
<span class="t" style="left:100px;top:303.9px;font-size:13px;color:#222;letter-spacing:0.172px;width:52.3px;text-align:right;">12,8</span>
<span class="t" style="left:112.8px;top:680.0px;font-size:13px;color:#017440;font-weight:bold;letter-spacing:-0.157px;">microexcel.ru</span>
<span class="t" style="left:8px;top:704.5px;font-size:12px;color:#444;letter-spacing:-0.010px;">Готово</span>
<span class="t" style="left:910.2px;top:704.8px;font-size:12px;color:#444;letter-spacing:-0.886px;">100 %</span>
</body></html>
